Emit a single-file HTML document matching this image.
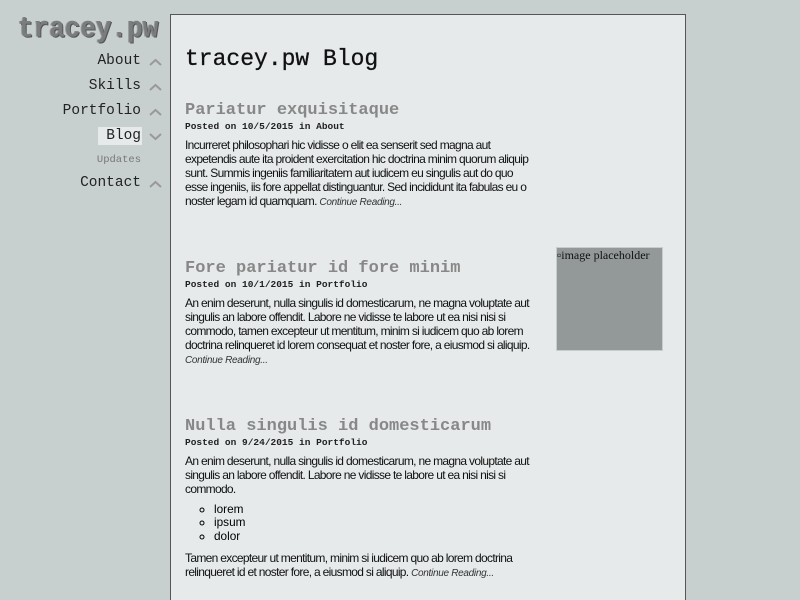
<!DOCTYPE html>
<html style="overflow:hidden"><head><meta charset="utf-8"><style>
body{margin:0;background:#c8d0cf;width:800px;height:600px;overflow:hidden;position:relative;font-family:"Liberation Sans",sans-serif;}
.logo{position:absolute;left:18px;top:9px;font:bold 26px/34px "Liberation Mono",monospace;color:#7a7d7d;transform:scaleY(1.15);transform-origin:top left;text-shadow:1px 1px 0 #555,-1px 0 0 #999;}
.nav{position:absolute;right:659px;font:14.5px "Liberation Mono",monospace;color:#222;text-align:right;white-space:nowrap}
.ar{position:absolute;left:149px;width:13px;height:8px}
.main{position:absolute;left:170px;top:14px;width:514px;height:586px;background:#e6eaea;border:1px solid #555;border-bottom:none;}
h1{position:absolute;left:14px;top:30px;margin:0;font:normal 23px/28px "Liberation Mono",monospace;color:#111;-webkit-text-stroke:0.3px #111}
.post{position:absolute;left:14px;width:360px;white-space:nowrap}
.post h2{margin:0;font:bold 17px/20px "Liberation Mono",monospace;color:#888;}
.meta{font:bold 9.5px/12px "Liberation Mono",monospace;color:#222;margin-bottom:5px}
.post p{margin:0 0 7px;font-size:12px;line-height:14px;color:#111;letter-spacing:-0.68px}
.post i{font-size:10px;color:#333;letter-spacing:-0.3px}
ul{margin:6px 0 8px;padding-left:29px;font-size:11.8px;line-height:13.4px;list-style:circle}
.img{position:absolute;left:385px;top:232px;width:105px;height:102px;background:#939998;border:1px solid #c8cccc;font:12px "Liberation Serif",serif;color:#111;}
</style></head><body>
<div class="logo">tracey.pw</div>
<div class="nav" style="top:53px">About</div><svg class="ar" style="top:58px" viewBox="0 0 13 8"><path d="M1 7L6.5 2L12 7" fill="none" stroke="#999" stroke-width="2"/></svg>
<div class="nav" style="top:78px">Skills</div><svg class="ar" style="top:83px" viewBox="0 0 13 8"><path d="M1 7L6.5 2L12 7" fill="none" stroke="#999" stroke-width="2"/></svg>
<div class="nav" style="top:103px">Portfolio</div><svg class="ar" style="top:108px" viewBox="0 0 13 8"><path d="M1 7L6.5 2L12 7" fill="none" stroke="#999" stroke-width="2"/></svg>
<div class="nav" style="top:127px;background:#e6eaea;padding:1px 1px 1px 8px;right:658px">Blog</div><svg class="ar" style="top:133px" viewBox="0 0 13 8"><path d="M1 1L6.5 6L12 1" fill="none" stroke="#999" stroke-width="2"/></svg>
<div class="nav" style="top:154px;font-size:10.5px;color:#777">Updates</div>
<div class="nav" style="top:175px">Contact</div><svg class="ar" style="top:180px" viewBox="0 0 13 8"><path d="M1 7L6.5 2L12 7" fill="none" stroke="#999" stroke-width="2"/></svg>
<div class="main">
<h1>tracey.pw Blog</h1>
<div class="post" style="top:86px"><h2>Pariatur exquisitaque</h2><div class="meta">Posted on 10/5/2015 in About</div>
<p>Incurreret philosophari hic vidisse o elit ea senserit sed magna aut<br>expetendis aute ita proident exercitation hic doctrina minim quorum aliquip<br>sunt. Summis ingeniis familiaritatem aut iudicem eu singulis aut do quo<br>esse ingeniis, iis fore appellat distinguantur. Sed incididunt ita fabulas eu o<br>noster legam id quamquam. <i>Continue Reading...</i></p></div>
<div class="post" style="top:244px"><h2>Fore pariatur id fore minim</h2><div class="meta">Posted on 10/1/2015 in Portfolio</div>
<p>An enim deserunt, nulla singulis id domesticarum, ne magna voluptate aut<br>singulis an labore offendit. Labore ne vidisse te labore ut ea nisi nisi si<br>commodo, tamen excepteur ut mentitum, minim si iudicem quo ab lorem<br>doctrina relinqueret id lorem consequat et noster fore, a eiusmod si aliquip.<br><i>Continue Reading...</i></p></div>
<div class="img">▫image placeholder</div>
<div class="post" style="top:402px"><h2>Nulla singulis id domesticarum</h2><div class="meta">Posted on 9/24/2015 in Portfolio</div>
<p>An enim deserunt, nulla singulis id domesticarum, ne magna voluptate aut<br>singulis an labore offendit. Labore ne vidisse te labore ut ea nisi nisi si<br>commodo.</p>
<ul><li>lorem</li><li>ipsum</li><li>dolor</li></ul>
<p>Tamen excepteur ut mentitum, minim si iudicem quo ab lorem doctrina<br>relinqueret id et noster fore, a eiusmod si aliquip. <i>Continue Reading...</i></p></div>
</div>
</body></html>
